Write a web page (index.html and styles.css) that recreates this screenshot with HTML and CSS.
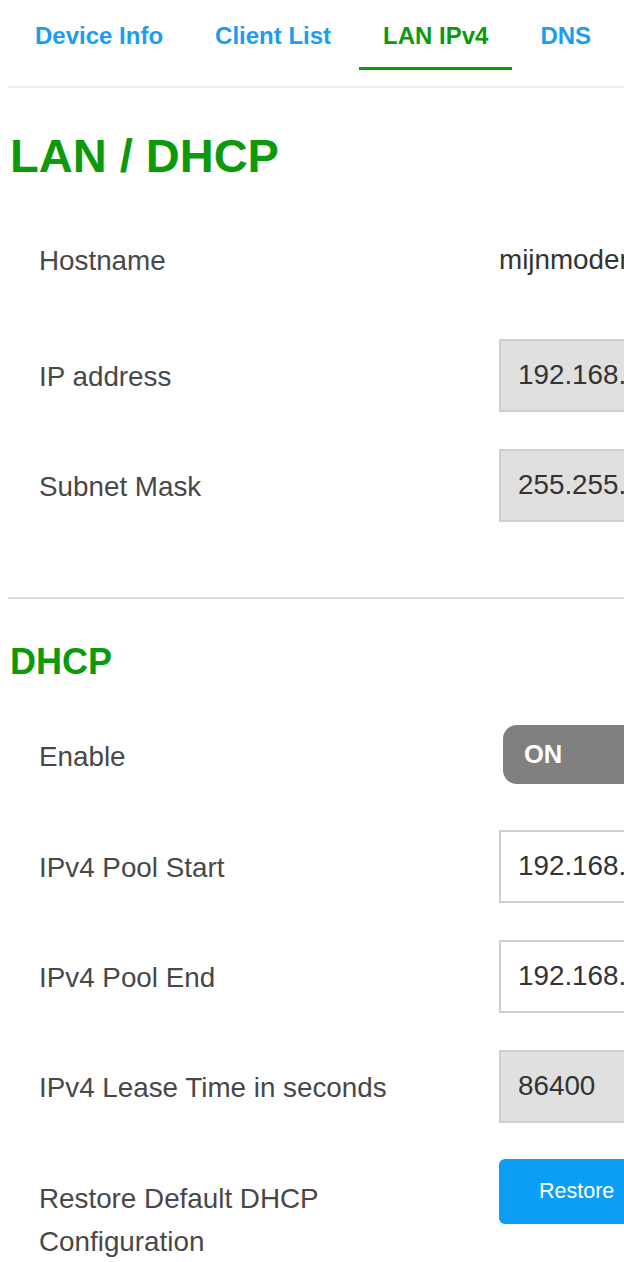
FILE: index.html
```html
<!DOCTYPE html>
<html lang="en">
<head>
<meta charset="utf-8">
<title>LAN IPv4</title>
<link rel="stylesheet" href="styles.css">
</head>
<body>
<nav class="tabs">
  <a class="tab">Device Info</a>
  <a class="tab">Client List</a>
  <a class="tab tab-active">LAN IPv4</a>
  <a class="tab">DNS</a>
</nav>

<section class="section">
  <h1 class="title">LAN / DHCP</h1>
  <div class="row row-text">
    <div class="label">Hostname</div>
    <div class="value">mijnmodem</div>
  </div>
  <div class="row">
    <div class="label">IP address</div>
    <input class="field field-disabled" value="192.168.1.1" readonly>
  </div>
  <div class="row">
    <div class="label">Subnet Mask</div>
    <input class="field field-disabled" value="255.255.255.0" readonly>
  </div>
</section>

<hr class="divider">

<section class="section">
  <h2 class="subtitle">DHCP</h2>
  <div class="row row-toggle">
    <div class="label">Enable</div>
    <div class="toggle"><span class="toggle-text">ON</span><span class="toggle-knob"></span></div>
  </div>
  <div class="row">
    <div class="label">IPv4 Pool Start</div>
    <input class="field" value="192.168.1.2">
  </div>
  <div class="row">
    <div class="label">IPv4 Pool End</div>
    <input class="field" value="192.168.1.254">
  </div>
  <div class="row">
    <div class="label">IPv4 Lease Time in seconds</div>
    <input class="field field-disabled" value="86400" readonly>
  </div>
  <div class="row row-top">
    <div class="label label-top">Restore Default DHCP Configuration</div>
    <button class="button">Restore</button>
  </div>
</section>
</body>
</html>
```

FILE: styles.css
```css
html {
  overflow: hidden;
}

body {
  margin: 8px;
  font-family: "Liberation Sans", Arial, Helvetica, sans-serif;
  background: #ffffff;
  color: #484848;
  width: 900px;
}

.tabs {
  display: flex;
  gap: 4px;
  padding: 0 0 16px 3px;
  border-bottom: 2px solid #ececec;
}

.tab {
  padding: 14px 24px 17px;
  font-size: 24px;
  line-height: 28px;
  font-weight: bold;
  color: #1c9cf2;
  white-space: nowrap;
  border-bottom: 3px solid transparent;
}

.tab-active {
  color: #0c990c;
  border-bottom-color: #0c990c;
}

.title {
  margin: 41px 0 21px 2px;
  font-size: 47px;
  line-height: 54px;
  font-weight: bold;
  color: #0c990c;
}

.subtitle {
  margin: 42px 0 15px 2px;
  font-size: 36px;
  line-height: 42px;
  font-weight: bold;
  color: #0c990c;
}

.section:first-of-type {
  padding-bottom: 57px;
}

.row {
  display: flex;
  align-items: center;
  height: 110px;
  padding-left: 31px;
}

.row-text {
  margin-bottom: 6px;
}

.row-toggle {
  height: 113px;
}

.row-top {
  align-items: flex-start;
  padding-top: 18px;
  height: auto;
}

.label {
  width: 460px;
  flex: none;
  padding-top: 3px;
  font-size: 27.8px;
  line-height: 43px;
  color: #484848;
}

.label-top {
  padding-top: 18px;
  width: 340px;
  margin-right: 120px;
}

.value {
  font-size: 27.8px;
  line-height: 43px;
  color: #333333;
  white-space: nowrap;
}

.field {
  box-sizing: border-box;
  width: 300px;
  height: 73px;
  margin: 0;
  padding: 0 0 0 17px;
  border: 2px solid #cfcfcf;
  background: #ffffff;
  font-family: "Liberation Sans", Arial, Helvetica, sans-serif;
  font-size: 27.8px;
  color: #333333;
  outline: none;
}

.field-disabled {
  background: #e0e0e0;
}

.toggle {
  display: flex;
  align-items: center;
  justify-content: space-between;
  box-sizing: border-box;
  width: 220px;
  height: 59px;
  margin-left: 4px;
  padding: 0 6px 0 21px;
  border-radius: 14px;
  background: #808080;
}

.toggle-text {
  font-size: 25.5px;
  font-weight: bold;
  color: #ffffff;
}

.toggle-knob {
  width: 48px;
  height: 48px;
  border-radius: 10px;
  background: #ffffff;
}

.button {
  box-sizing: border-box;
  width: 200px;
  height: 65px;
  margin: 0;
  padding: 0 0 0 40px;
  border: none;
  border-radius: 6px;
  background: #0b9ef5;
  color: #ffffff;
  font-family: "Liberation Sans", Arial, Helvetica, sans-serif;
  font-size: 21.5px;
  text-align: left;
}

.divider {
  margin: 0;
  height: 0;
  border: none;
  border-top: 2px solid #dddddd;
}
```
